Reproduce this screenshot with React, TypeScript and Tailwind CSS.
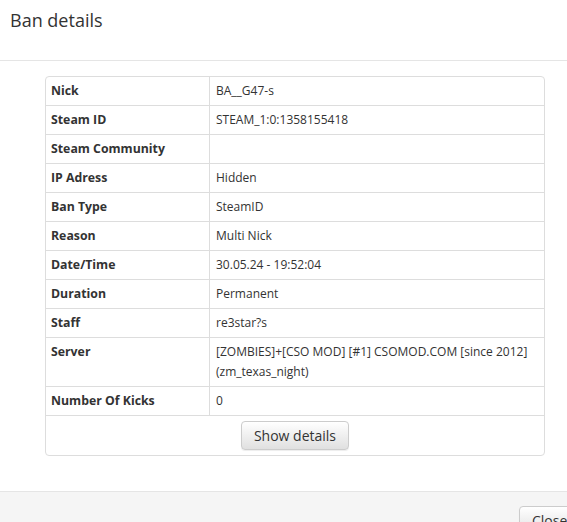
import React from "react";

const rows: { label: string; value: React.ReactNode }[] = [
  { label: "Nick", value: "BA__G47-s" },
  { label: "Steam ID", value: "STEAM_1:0:1358155418" },
  { label: "Steam Community", value: "" },
  { label: "IP Adress", value: "Hidden" },
  { label: "Ban Type", value: "SteamID" },
  { label: "Reason", value: "Multi Nick" },
  { label: "Date/Time", value: "30.05.24 - 19:52:04" },
  { label: "Duration", value: "Permanent" },
  { label: "Staff", value: "re3star?s" },
  {
    label: "Server",
    value: "[ZOMBIES]+[CSO MOD] [#1] CSOMOD.COM [since 2012] (zm_texas_night)",
  },
  { label: "Number Of Kicks", value: "0" },
];

const btn =
  "h-[29px] px-3 rounded-[4px] border border-[#cccccc] bg-gradient-to-b from-white to-[#e0e0e0] text-[14px] leading-[20px] text-[#333] shadow-[inset_0_1px_0_rgba(255,255,255,0.15),0_1px_1px_rgba(0,0,0,0.075)]";

export default function App() {
  return (
    <div
      className="w-full h-[522px] overflow-hidden bg-white text-[#333]"
      style={{ fontFamily: '"Open Sans", "Noto Sans", sans-serif' }}
    >
      <div className="ml-[-5px] w-[600px]">
        <div className="h-[61px] border-b border-[#e5e5e5] px-[15px] pt-[10px]">
          <h4 className="text-[18px] leading-[20px] font-normal m-0">Ban details</h4>
        </div>
        <div className="pt-[15px] pb-[35px]">
          <div className="mx-auto w-[500px] border border-[#dddddd] rounded-[4px] text-[12px] leading-[20px]">
            {rows.map((r, i) => (
              <div
                key={r.label}
                className={"flex " + (i > 0 ? "border-t border-[#dddddd]" : "")}
              >
                <div className="w-[164px] shrink-0 px-[5px] py-[4px] text-[12.3px] font-bold border-r border-[#dddddd]">
                  {r.label}
                </div>
                <div className="flex-1 pl-[6px] pr-[5px] py-[4px]">{r.value}</div>
              </div>
            ))}
            <div className="flex justify-center border-t border-[#dddddd] py-[5px]">
              <button className={btn}>Show details</button>
            </div>
          </div>
        </div>
        <div className="border-t border-[#e5e5e5] bg-[#f5f5f5] h-[80px] flex justify-end pr-[15px] pt-[14px]">
          <button className={btn + " w-[61px] self-start"}>Close</button>
        </div>
      </div>
    </div>
  );
}
